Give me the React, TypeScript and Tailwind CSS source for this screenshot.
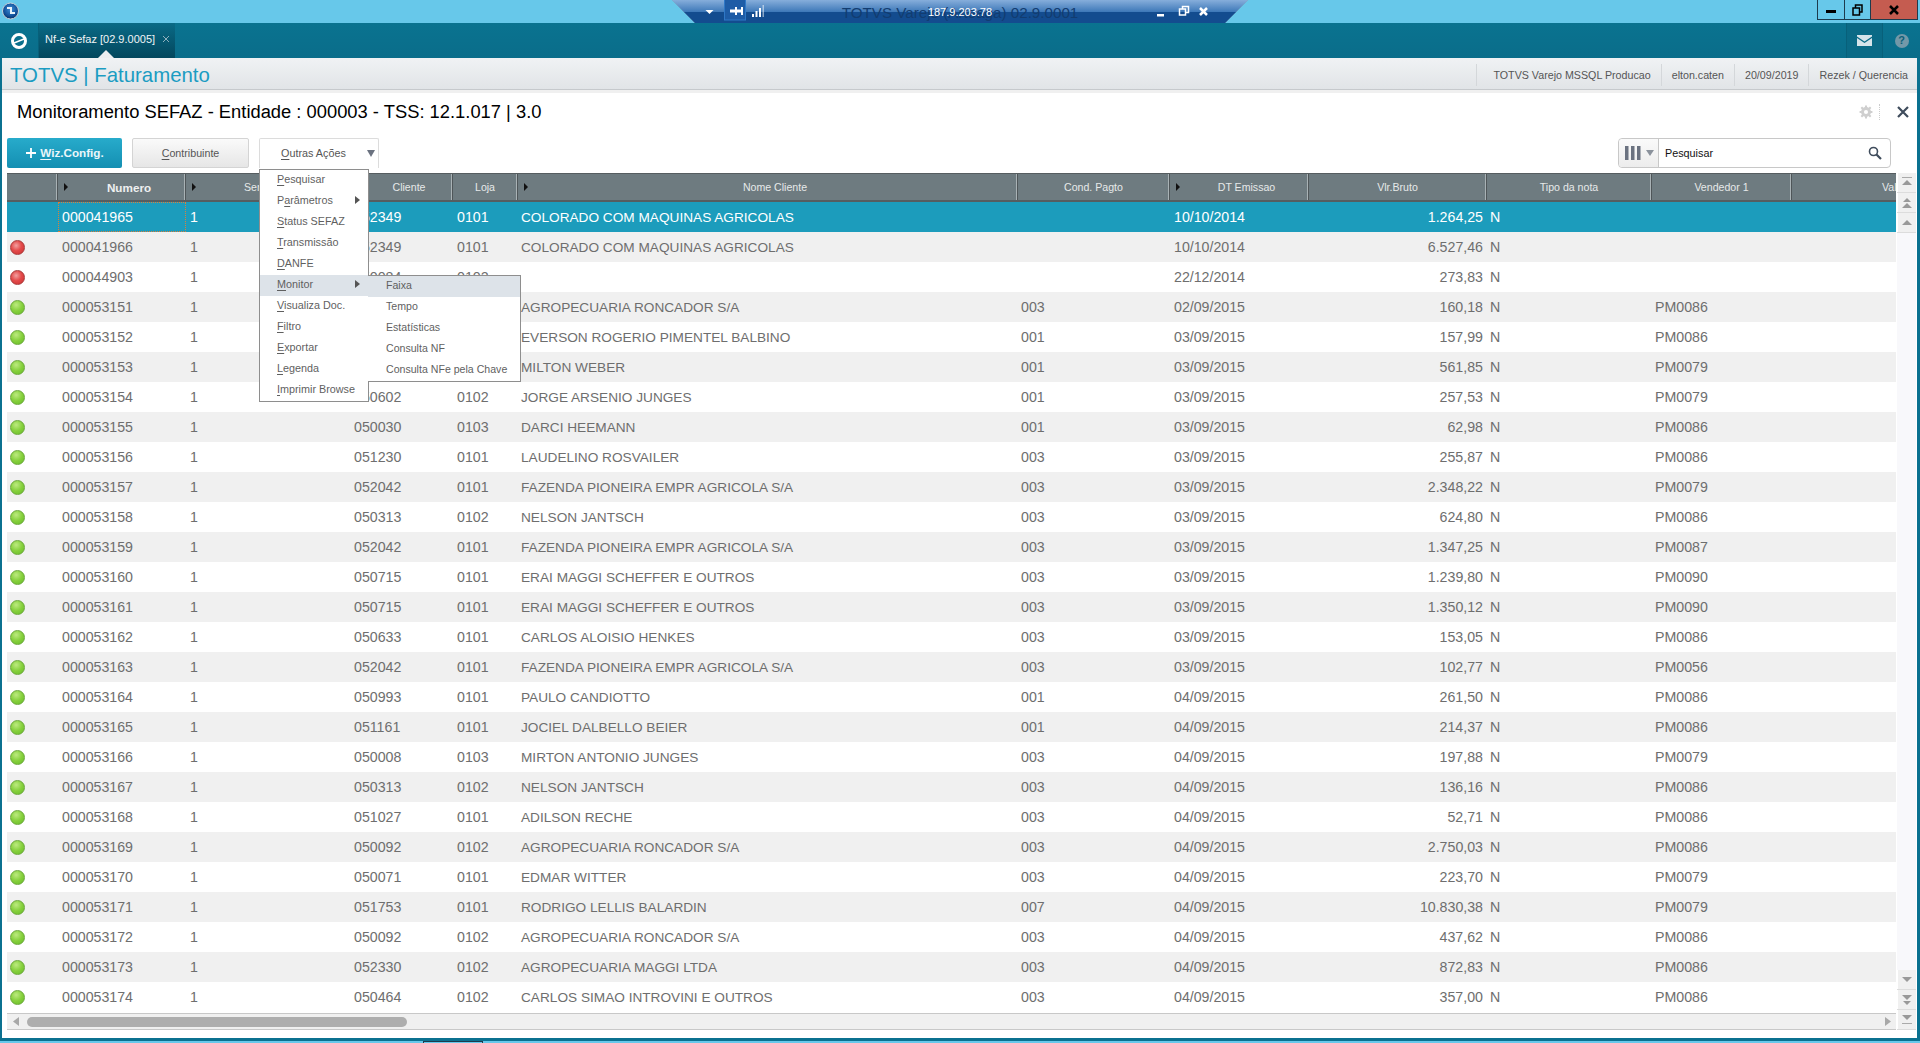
import React from "react";

type Row = {
  dot: "" | "red" | "green";
  num: string;
  cli: string;
  loja: string;
  nome: string;
  cond: string;
  dt: string;
  val: string;
  vend: string;
};

const raw: [string, string, string, string, string, string, string, string][] = [
  ["000041966", "052349", "0101", "COLORADO COM MAQUINAS AGRICOLAS", "", "10/10/2014", "6.527,46", ""],
  ["000044903", "050084", "0102", "", "", "22/12/2014", "273,83", ""],
  ["000053151", "050092", "0102", "AGROPECUARIA RONCADOR S/A", "003", "02/09/2015", "160,18", "PM0086"],
  ["000053152", "050231", "0101", "EVERSON ROGERIO PIMENTEL BALBINO", "001", "03/09/2015", "157,99", "PM0086"],
  ["000053153", "050417", "0101", "MILTON WEBER", "001", "03/09/2015", "561,85", "PM0079"],
  ["000053154", "050602", "0102", "JORGE ARSENIO JUNGES", "001", "03/09/2015", "257,53", "PM0079"],
  ["000053155", "050030", "0103", "DARCI HEEMANN", "001", "03/09/2015", "62,98", "PM0086"],
  ["000053156", "051230", "0101", "LAUDELINO ROSVAILER", "003", "03/09/2015", "255,87", "PM0086"],
  ["000053157", "052042", "0101", "FAZENDA PIONEIRA EMPR AGRICOLA S/A", "003", "03/09/2015", "2.348,22", "PM0079"],
  ["000053158", "050313", "0102", "NELSON JANTSCH", "003", "03/09/2015", "624,80", "PM0086"],
  ["000053159", "052042", "0101", "FAZENDA PIONEIRA EMPR AGRICOLA S/A", "003", "03/09/2015", "1.347,25", "PM0087"],
  ["000053160", "050715", "0101", "ERAI MAGGI SCHEFFER E OUTROS", "003", "03/09/2015", "1.239,80", "PM0090"],
  ["000053161", "050715", "0101", "ERAI MAGGI SCHEFFER E OUTROS", "003", "03/09/2015", "1.350,12", "PM0090"],
  ["000053162", "050633", "0101", "CARLOS ALOISIO HENKES", "003", "03/09/2015", "153,05", "PM0086"],
  ["000053163", "052042", "0101", "FAZENDA PIONEIRA EMPR AGRICOLA S/A", "003", "03/09/2015", "102,77", "PM0056"],
  ["000053164", "050993", "0101", "PAULO CANDIOTTO", "001", "04/09/2015", "261,50", "PM0086"],
  ["000053165", "051161", "0101", "JOCIEL DALBELLO BEIER", "001", "04/09/2015", "214,37", "PM0086"],
  ["000053166", "050008", "0103", "MIRTON ANTONIO JUNGES", "003", "04/09/2015", "197,88", "PM0079"],
  ["000053167", "050313", "0102", "NELSON JANTSCH", "003", "04/09/2015", "136,16", "PM0086"],
  ["000053168", "051027", "0101", "ADILSON RECHE", "003", "04/09/2015", "52,71", "PM0086"],
  ["000053169", "050092", "0102", "AGROPECUARIA RONCADOR S/A", "003", "04/09/2015", "2.750,03", "PM0086"],
  ["000053170", "050071", "0101", "EDMAR WITTER", "003", "04/09/2015", "223,70", "PM0079"],
  ["000053171", "051753", "0101", "RODRIGO LELLIS BALARDIN", "007", "04/09/2015", "10.830,38", "PM0079"],
  ["000053172", "050092", "0102", "AGROPECUARIA RONCADOR S/A", "003", "04/09/2015", "437,62", "PM0086"],
  ["000053173", "052330", "0102", "AGROPECUARIA MAGGI LTDA", "003", "04/09/2015", "872,83", "PM0086"],
  ["000053174", "050464", "0102", "CARLOS SIMAO INTROVINI E OUTROS", "003", "04/09/2015", "357,00", "PM0086"],
];

const rows: Row[] = [
  {
    dot: "",
    num: "000041965",
    cli: "052349",
    loja: "0101",
    nome: "COLORADO COM MAQUINAS AGRICOLAS",
    cond: "",
    dt: "10/10/2014",
    val: "1.264,25",
    vend: "",
  },
  ...raw.map((r, i) => ({
    dot: (i < 2 ? "red" : "green") as Row["dot"],
    num: r[0],
    cli: r[1],
    loja: r[2],
    nome: r[3],
    cond: r[4],
    dt: r[5],
    val: r[6],
    vend: r[7],
  })),
];

const cols =
  "grid grid-cols-[51px_128px_165px_102px_65px_500px_152px_139px_178px_165px_140px_104px]";

function Arrow() {
  return (
    <svg width="6" height="8" viewBox="0 0 6 8" className="ml-[5px] shrink-0">
      <path d="M1 0l4 4-4 4z" fill="#111" />
    </svg>
  );
}

function Th({
  label,
  arrow,
  bold,
}: {
  label?: string;
  arrow?: boolean;
  bold?: boolean;
}) {
  return (
    <div className="flex items-center border-r border-r-[#4f5659] shadow-[inset_-1px_0_0_#a9b2b5] overflow-hidden">
      {arrow && <Arrow />}
      <span
        className={`flex-1 text-center whitespace-nowrap pt-[1px] ${
          bold ? "font-bold text-[11.7px] text-[#eef0f0]" : "text-[10.6px] text-[#e6e9e9]"
        } ${arrow ? "pl-[4px]" : ""}`}
      >
        {label}
      </span>
    </div>
  );
}

function Dot({ color }: { color: "" | "red" | "green" }) {
  if (color === "red") {
    return (
      <span className="ml-[3px] block h-[15px] w-[15px] rounded-full border border-[#a83a3a] bg-[radial-gradient(circle_at_40%_35%,#f2a0a0_0%,#e44b4b_45%,#c92f2f_100%)]" />
    );
  }
  if (color === "green") {
    return (
      <span className="ml-[3px] block h-[15px] w-[15px] rounded-full border border-[#6aa83a] bg-[radial-gradient(circle_at_40%_30%,#bdea80_0%,#86d03c_50%,#68bb28_100%)]" />
    );
  }
  return null;
}

function Key({ text, at = 0 }: { text: string; at?: number }) {
  return (
    <>
      {text.slice(0, at)}
      <span className="underline underline-offset-2">{text[at]}</span>
      {text.slice(at + 1)}
    </>
  );
}

function TableRow({ row, index }: { row: Row; index: number }) {
  const selected = index === 0;
  const bg = selected
    ? "bg-[#1c9cbc] text-white"
    : index % 2 === 1
      ? "bg-[#f0f0f0] text-[#6e6e6e]"
      : "bg-white text-[#6e6e6e]";
  return (
    <div className={`${cols} h-[30px] items-center text-[14.2px] leading-[30px] whitespace-nowrap ${bg}`}>
      <div className="flex items-center">
        <Dot color={row.dot} />
      </div>
      <div
        className={`h-[30px] pl-[4px] ${
          selected ? "outline outline-1 outline-dotted -outline-offset-1 outline-[#d9803c]" : ""
        }`}
      >
        {row.num}
      </div>
      <div className="pl-[4px]">1</div>
      <div className="pl-[3px]">{row.cli}</div>
      <div className="pl-[4px]">{row.loja}</div>
      <div className="h-[30px] pl-[3px] text-[13.65px] leading-[31px]">{row.nome}</div>
      <div className="pl-[3px]">{row.cond}</div>
      <div className="pl-[4px]">{row.dt}</div>
      <div className="pr-[4px] text-right">{row.val}</div>
      <div className="pl-[3px]">N</div>
      <div className="pl-[3px]">{row.vend}</div>
      <div />
    </div>
  );
}

function ScrollBtn({ kind }: { kind: "top" | "pageUp" | "up" | "down" | "pageDown" | "bottom" }) {
  const paths: Record<string, React.ReactNode> = {
    top: (
      <>
        <rect x="2" y="1" width="10" height="1" fill="#aaa" />
        <path d="M2 9l5-5 5 5z" fill="#999" />
      </>
    ),
    pageUp: (
      <>
        <path d="M3 6l4-4 4 4z" fill="#999" />
        <path d="M2 12l5-5 5 5z" fill="#999" />
      </>
    ),
    up: <path d="M2 9l5-5 5 5z" fill="#999" />,
    down: <path d="M2 4l5 5 5-5z" fill="#999" />,
    pageDown: (
      <>
        <path d="M2 2l5 5 5-5z" fill="#999" />
        <path d="M3 8l4 4 4-4z" fill="#999" />
      </>
    ),
    bottom: (
      <>
        <path d="M2 2l5 5 5-5z" fill="#999" />
        <rect x="2" y="10" width="10" height="1" fill="#aaa" />
      </>
    ),
  };
  return (
    <div className="flex h-[20px] items-center justify-center border-b border-[#dcdcdc] bg-[#f0f0f0] shadow-[inset_1px_0_0_#fff]">
      <svg width="14" height="14" viewBox="0 0 14 14">
        {paths[kind]}
      </svg>
    </div>
  );
}

function MenuItem({
  text,
  at,
  sub,
  active,
}: {
  text: string;
  at?: number;
  sub?: boolean;
  active?: boolean;
}) {
  return (
    <div
      className={`relative flex h-[21px] items-center pl-[17px] pb-[2px] whitespace-nowrap ${
        active ? "bg-[#dde3e9]" : ""
      }`}
    >
      <span>
        <Key text={text} at={at} />
      </span>
      {sub && (
        <svg width="5" height="8" viewBox="0 0 5 8" className="absolute left-[95px] top-[5px]">
          <path d="M0 0l5 4-5 4z" fill="#555" />
        </svg>
      )}
    </div>
  );
}

export default function App() {
  return (
    <div className="flex h-[1043px] w-[1920px] flex-col overflow-hidden bg-[#0b7190] font-['Liberation_Sans',Arial,sans-serif]">
      {/* barra do windows */}
      <div className="relative flex h-[23px] shrink-0 items-start bg-[#67c8ea]">
        <svg width="20" height="20" viewBox="0 0 20 20" className="ml-[1px] mt-[1px]">
          <defs>
            <radialGradient id="ball" cx="50%" cy="40%" r="60%">
              <stop offset="0%" stopColor="#3f8fd8" />
              <stop offset="70%" stopColor="#12509a" />
              <stop offset="100%" stopColor="#0b2f60" />
            </radialGradient>
          </defs>
          <circle cx="9.5" cy="10" r="8" fill="url(#ball)" stroke="#c8d4dc" strokeWidth="1" />
          <path d="M6 7h4v5h4" fill="none" stroke="#e8f2fa" strokeWidth="2" />
        </svg>

        {/* barra do acesso remoto */}
        <div className="absolute left-[672px] top-0 h-[26px] w-[576px] [clip-path:polygon(0_0,100%_0,95.5%_100%,4.5%_100%)] bg-[#8a94a4]">
          <div className="h-[12px] bg-[linear-gradient(#86aedb,#3d78b8)]" />
          <div className="h-[13px] bg-[#134c8f]" />
        </div>
        <div className="absolute left-[672px] top-0 flex h-[25px] w-[576px] items-center justify-center">
          <span className="text-[15.2px] leading-none text-[#123c70]">TOTVS Varejo (Arteaga) 02.9.0001</span>
        </div>
        <div className="absolute left-[672px] top-0 flex h-[25px] w-[576px] items-center justify-center">
          <span className="text-[11px] leading-none text-white">187.9.203.78</span>
        </div>
        <svg width="130" height="25" viewBox="0 0 130 25" className="absolute left-[700px] top-0">
          <path d="M5.5 10h8l-4 4z" fill="#fff" />
          <rect x="24.5" y="-1" width="21" height="21" fill="#1e5ca6" stroke="#2f78c6" />
          <path d="M30 11h12" stroke="#fff" strokeWidth="3" fill="none" />
          <path d="M36 7v8M42 7v8" stroke="#fff" strokeWidth="2" fill="none" />
          <path d="M52 14h2v3h-2zM55.5 11h2v6h-2zM59 8h2v9h-2z" fill="#fff" />
          <path d="M62.5 5h1.5v12h-1.5z" fill="#fff" opacity="0.5" />
        </svg>
        <svg width="60" height="25" viewBox="0 0 60 25" className="absolute left-[1155px] top-0">
          <rect x="2" y="14" width="7" height="2.5" fill="#fff" />
          <path d="M24.5 9h6v6h-6zM27.5 9V6.5h6v6h-3" fill="none" stroke="#fff" strokeWidth="1.5" />
          <path d="M45 8l7 7M52 8l-7 7" stroke="#fff" strokeWidth="2.5" />
        </svg>

        {/* botoes da janela */}
        <div className="ml-auto mr-[2px] flex h-[20px] border border-t-0 border-[#1d3b4d]">
          <div className="flex w-[27px] items-center justify-center border-r border-[#1d3b4d]">
            <span className="mt-[3px] block h-[3px] w-[10px] bg-black" />
          </div>
          <div className="flex w-[26px] items-center justify-center border-r border-[#1d3b4d]">
            <svg width="11" height="12" viewBox="0 0 11 12">
              <path d="M1 4h6.5v7H1zM3.5 4V1h6.5v7H7.5" fill="none" stroke="#000" strokeWidth="1.5" />
            </svg>
          </div>
          <div className="flex w-[46px] items-center justify-center bg-[#c55c50]">
            <svg width="10" height="10" viewBox="0 0 10 10">
              <path d="M1 1l8 8M9 1l-8 8" stroke="#000" strokeWidth="2.5" />
            </svg>
          </div>
        </div>
      </div>

      {/* abas */}
      <div className="relative flex h-[35px] shrink-0 items-stretch bg-[linear-gradient(#0a7390,#0a6d8a)]">
        <div className="flex w-[39px] items-center justify-center border-r border-[#08607a]">
          <svg width="18" height="18" viewBox="0 0 18 18">
            <circle cx="9" cy="9" r="6.5" fill="none" stroke="#fff" strokeWidth="3" />
            <path d="M4 11l10-4" fill="none" stroke="#fff" strokeWidth="1.5" />
          </svg>
        </div>
        <div className="flex w-[136px] items-center whitespace-nowrap bg-[linear-gradient(#0a6a86,#03475d)] pl-[6px] pb-[2px] text-[11px] text-[#f0f5f7]">
          <span>Nf-e Sefaz [02.9.0005]</span>
          <svg width="8" height="8" viewBox="0 0 8 8" className="ml-[7px] mb-[1px] shrink-0">
            <path d="M1 1l6 6M7 1l-6 6" stroke="#8fb0bd" strokeWidth="1" />
          </svg>
        </div>
        <svg width="16" height="8" viewBox="0 0 16 8" className="absolute left-[98px] bottom-0">
          <path d="M0 8l8-8 8 8z" fill="#eceef0" />
        </svg>
        <div className="ml-auto flex w-[37px] items-center justify-center border-x border-[#08607a] bg-[#0a6a86]">
          <svg width="15" height="11" viewBox="0 0 15 11">
            <path d="M0 0h15v1.5L7.5 6.500 0 1.500z" fill="#d6e4ea" />
            <path d="M0 3l7.5 5L15 3v8H0z" fill="#d6e4ea" />
          </svg>
        </div>
        <div className="flex w-[37px] items-center justify-center">
          <span className="flex h-[14px] w-[14px] items-center justify-center rounded-full bg-[#7398a8] text-[11px] font-bold leading-none text-[#0b5f78]">
            ?
          </span>
        </div>
      </div>

      {/* area branca */}
      <div className="ml-[2px] mr-[3px] flex h-[980px] shrink-0 flex-col bg-white">
        <div className="flex h-[32px] shrink-0 items-center border-b border-b-[#c6c9cc] bg-[linear-gradient(#f0f2f4,#e1e4e7)] pl-[8px] pt-[3px]">
          <span className="text-[20.4px] leading-none text-[#1b9cc2]">TOTVS | Faturamento</span>
          <div className="ml-auto flex h-[22px] items-center whitespace-nowrap text-[10.7px] text-[#555]">
            <span className="flex h-full items-center border-l border-[#d4d7da] pl-[16px] pr-[10px]">TOTVS Varejo MSSQL Producao</span>
            <span className="flex h-full items-center border-l border-[#d4d7da] px-[10px]">elton.caten</span>
            <span className="flex h-full items-center border-l border-[#d4d7da] px-[10px]">20/09/2019</span>
            <span className="flex h-full items-center border-l border-[#d4d7da] pl-[10px] pr-[9px]">Rezek / Querencia</span>
          </div>
        </div>
        <div className="h-[3px] shrink-0 bg-[#f0f0f0]" />

        <div className="flex h-[45px] shrink-0 items-center pb-[7px] pl-[15px]">
          <span className="text-[18.35px] leading-none text-black">
            Monitoramento SEFAZ - Entidade : 000003 - TSS: 12.1.017 | 3.0
          </span>
          <div className="ml-auto flex items-center">
            <svg width="14" height="14" viewBox="0 0 24 24" fill="none" stroke="#cfcfcf" strokeWidth="5">
              <circle cx="12" cy="12" r="6" />
              <path d="M12 1v4M12 19v4M1 12h4M19 12h4M4 4l3 3M17 17l3 3M4 20l3-3M17 7l3-3" strokeWidth="3.5" />
            </svg>
            <span className="mx-[16px] ml-[6px] h-[16px] border-l border-dotted border-[#ccc]" />
            <svg width="14" height="14" viewBox="0 0 14 14" className="mr-[7px]">
              <path d="M2 2l10 10M12 2L2 12" stroke="#3f4c5c" strokeWidth="2.2" />
            </svg>
          </div>
        </div>

        <div className="flex h-[30px] shrink-0 items-stretch pl-[5px]">
          <div className="flex w-[115px] items-center justify-center rounded-[2px] bg-[linear-gradient(#27abcb,#148fb2)] text-[11.7px] font-bold text-[#eaf6fa]">
            <svg width="12" height="12" viewBox="0 0 12 12" className="mr-[3px]">
              <path d="M6 1v10M1 6h10" stroke="#fff" strokeWidth="1.8" />
            </svg>
            <span>
              <Key text="Wiz.Config." />
            </span>
          </div>
          <div className="ml-[10px] flex w-[117px] items-center justify-center rounded-[2px] border border-[#d4d4d4] bg-[linear-gradient(#fafafa,#e6e6e6)] text-[10.7px] text-[#555]">
            <span>
              <Key text="Contribuinte" />
            </span>
          </div>
          <div className="ml-[10px] flex w-[120px] items-center whitespace-nowrap rounded-t-[2px] border border-b-0 border-[#dcdcdc] pl-[21px] text-[10.8px] text-[#555]">
            <span>
              <Key text="Outras Ações" />
            </span>
            <svg width="8" height="7" viewBox="0 0 8 7" className="ml-auto mr-[3px]">
              <path d="M0 0h8L4 7z" fill="#6b7280" />
            </svg>
          </div>

          <div className="ml-auto mr-[26px] flex w-[273px] rounded-[4px] border border-[#c8c8c8]">
            <div className="flex w-[40px] items-center rounded-l-[4px] border-r border-[#c8c8c8] bg-[linear-gradient(#fafafa,#ececec)] pl-[6px]">
              <svg width="16" height="14" viewBox="0 0 16 14">
                <path d="M0 0h3.5v14H0zM6 0h3.5v14H6zM12 0h3.5v14H12z" fill="#6b7280" />
              </svg>
              <svg width="8" height="6" viewBox="0 0 8 6" className="ml-[5px]">
                <path d="M0 0h8L4 6z" fill="#8b929c" />
              </svg>
            </div>
            <div className="flex flex-1 items-center pl-[6px] pr-[8px] text-[10.8px] text-[#111]">
              <span>Pesquisar</span>
              <svg width="14" height="14" viewBox="0 0 14 14" className="ml-auto">
                <circle cx="5.5" cy="5.5" r="4" fill="none" stroke="#3f4c5c" strokeWidth="1.6" />
                <path d="M8.5 8.5l4.5 4.5" stroke="#3f4c5c" strokeWidth="2.2" />
              </svg>
            </div>
          </div>
        </div>

        {/* grid */}
        <div className="relative mt-[5px] flex h-[857px] shrink-0 pl-[5px]">
          <div className="flex w-[1889px] flex-col">
            <div className={`${cols} h-[29px] shrink-0 border-t border-b-2 border-[#565d60] bg-[#6e7b80]`}>
              <Th />
              <Th label="Numero" arrow bold />
              <Th label="Serie da nota" arrow />
              <Th label="Cliente" arrow />
              <Th label="Loja" />
              <Th label="Nome Cliente" arrow />
              <Th label="Cond. Pagto" />
              <Th label="DT Emissao" arrow />
              <Th label="Vlr.Bruto" />
              <Th label="Tipo da nota" />
              <Th label="Vendedor 1" />
              <div className="overflow-hidden whitespace-nowrap pl-[90px] text-[10.6px] leading-[27px] text-[#e6e9e9]">
                Valor
              </div>
            </div>
            <div className="h-[810px] shrink-0">
              {rows.map((r, i) => (
                <TableRow key={r.num} row={r} index={i} />
              ))}
            </div>
            <div className="mt-[1px] flex h-[17px] shrink-0 items-center border-y border-[#c8c8c8] bg-[#f0f0f0]">
              <svg width="6" height="9" viewBox="0 0 6 9" className="ml-[6px]">
                <path d="M6 0v9L0 4.5z" fill="#a8a8a8" />
              </svg>
              <div className="ml-[8px] h-[10px] w-[380px] rounded-[5px] bg-[#aeaeae]" />
              <svg width="6" height="9" viewBox="0 0 6 9" className="ml-auto mr-[5px]">
                <path d="M0 0v9l6-4.5z" fill="#a8a8a8" />
              </svg>
            </div>
          </div>

          <div className="ml-[1px] flex h-[857px] w-[19px] flex-col bg-[#f8f8fb]">
            <ScrollBtn kind="top" />
            <ScrollBtn kind="pageUp" />
            <ScrollBtn kind="up" />
            <div className="flex-1" />
            <ScrollBtn kind="down" />
            <ScrollBtn kind="pageDown" />
            <ScrollBtn kind="bottom" />
          </div>

          {/* menu outras acoes */}
          <div className="absolute left-[257px] top-[-4px] w-[110px] border border-[#8e8e8e] bg-white text-[10.8px] text-[#5f5f5f]">
            <MenuItem text="Pesquisar" />
            <MenuItem text="Parâmetros" at={1} sub />
            <MenuItem text="Status SEFAZ" />
            <MenuItem text="Transmissão" />
            <MenuItem text="DANFE" />
            <MenuItem text="Monitor" sub active />
            <MenuItem text="Visualiza Doc." />
            <MenuItem text="Filtro" />
            <MenuItem text="Exportar" />
            <MenuItem text="Legenda" />
            <MenuItem text="Imprimir Browse" />
          </div>
          <div className="absolute left-[366px] top-[102px] w-[153px] border border-l-0 border-[#8e8e8e] bg-white text-[10.6px] text-[#5f5f5f]">
            {["Faixa", "Tempo", "Estatísticas", "Consulta NF", "Consulta NFe pela Chave"].map((t, i) => (
              <div
                key={t}
                className={`flex h-[21px] items-center pl-[18px] pb-[2px] whitespace-nowrap ${i === 0 ? "bg-[#dde3e9]" : ""}`}
              >
                {t}
              </div>
            ))}
          </div>
        </div>
      </div>

      {/* rodape */}
      <div className="mt-[3px] flex h-[2px] shrink-0 bg-[#67c8ea]">
        <div className="ml-[423px] w-[60px] border-x border-t border-[#1d3b4d]" />
      </div>
    </div>
  );
}
